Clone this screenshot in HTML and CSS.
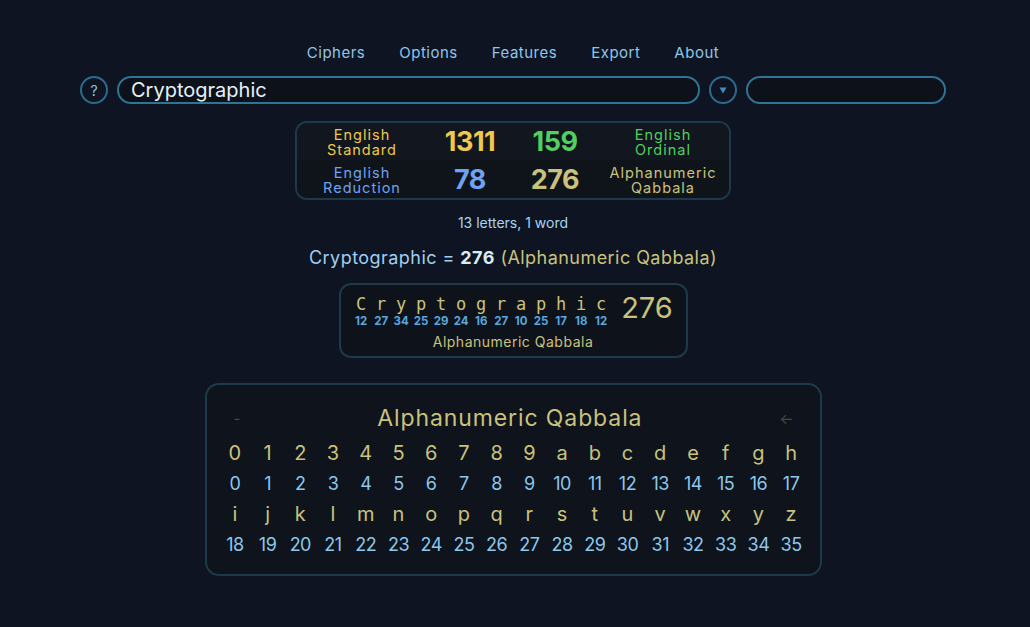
FILE: index.html
```html
<!DOCTYPE html>
<html>
<head>
<meta charset="utf-8">
<link rel="stylesheet" href="styles.css">
</head>
<body>
<div class="page">
  <nav class="menu">
    <span>Ciphers</span><span>Options</span><span>Features</span><span>Export</span><span>About</span>
  </nav>
  <div class="search">
    <div class="circle">?</div>
    <div class="input main">Cryptographic</div>
    <div class="circle"><svg width="8" height="7" viewBox="0 0 8 7"><path d="M0.5 0.5 H7.5 L4 6.5 Z" fill="#3a8fc0"/></svg></div>
    <div class="input side"></div>
  </div>

  <div class="results">
    <div class="row r1">
      <div class="lbl yellow">English<br>Standard</div>
      <div class="num yellow">1311</div>
      <div class="num green">159</div>
      <div class="lbl green">English<br>Ordinal</div>
    </div>
    <div class="row r2">
      <div class="lbl blue">English<br>Reduction</div>
      <div class="num blue">78</div>
      <div class="num khaki">276</div>
      <div class="lbl khaki">Alphanumeric<br>Qabbala</div>
    </div>
  </div>

  <div class="count">13 letters, 1 word</div>
  <div class="sum"><span class="w">Cryptographic = </span><b>276</b> <span class="khaki">(Alphanumeric Qabbala)</span></div>

  <div class="breakdown">
    <div class="bd-top">
      <div class="letters">
        <div class="lc"><span>C</span><i>12</i></div>
        <div class="lc"><span>r</span><i>27</i></div>
        <div class="lc"><span>y</span><i>34</i></div>
        <div class="lc"><span>p</span><i>25</i></div>
        <div class="lc"><span>t</span><i>29</i></div>
        <div class="lc"><span>o</span><i>24</i></div>
        <div class="lc"><span>g</span><i>16</i></div>
        <div class="lc"><span>r</span><i>27</i></div>
        <div class="lc"><span>a</span><i>10</i></div>
        <div class="lc"><span>p</span><i>25</i></div>
        <div class="lc"><span>h</span><i>17</i></div>
        <div class="lc"><span>i</span><i>18</i></div>
        <div class="lc"><span>c</span><i>12</i></div>
      </div>
      <div class="total">276</div>
    </div>
    <div class="bd-label">Alphanumeric Qabbala</div>
  </div>

  <div class="chart">
    <div class="chart-head">
      <span class="dim minus">-</span>
      <span class="title">Alphanumeric Qabbala</span>
      <span class="dim arrow">&#8592;</span>
    </div>
    <div class="grid">
      <span class="l">0</span><span class="l">1</span><span class="l">2</span><span class="l">3</span><span class="l">4</span><span class="l">5</span><span class="l">6</span><span class="l">7</span><span class="l">8</span><span class="l">9</span><span class="l">a</span><span class="l">b</span><span class="l">c</span><span class="l">d</span><span class="l">e</span><span class="l">f</span><span class="l">g</span><span class="l">h</span>
      <span class="n">0</span><span class="n">1</span><span class="n">2</span><span class="n">3</span><span class="n">4</span><span class="n">5</span><span class="n">6</span><span class="n">7</span><span class="n">8</span><span class="n">9</span><span class="n">10</span><span class="n">11</span><span class="n">12</span><span class="n">13</span><span class="n">14</span><span class="n">15</span><span class="n">16</span><span class="n">17</span>
      <span class="l">i</span><span class="l">j</span><span class="l">k</span><span class="l">l</span><span class="l">m</span><span class="l">n</span><span class="l">o</span><span class="l">p</span><span class="l">q</span><span class="l">r</span><span class="l">s</span><span class="l">t</span><span class="l">u</span><span class="l">v</span><span class="l">w</span><span class="l">x</span><span class="l">y</span><span class="l">z</span>
      <span class="n">18</span><span class="n">19</span><span class="n">20</span><span class="n">21</span><span class="n">22</span><span class="n">23</span><span class="n">24</span><span class="n">25</span><span class="n">26</span><span class="n">27</span><span class="n">28</span><span class="n">29</span><span class="n">30</span><span class="n">31</span><span class="n">32</span><span class="n">33</span><span class="n">34</span><span class="n">35</span>
    </div>
  </div>
</div>
</body>
</html>
```

FILE: styles.css
```css
html, body {
  margin: 0;
  padding: 0;
  background: #0e1422;
  height: 100%;
}
body {
  font-family: Inter, "Noto Sans", sans-serif;
  color: #9fd0f0;
}
.page {
  width: 1026px;
  display: flex;
  flex-direction: column;
  align-items: center;
}
.menu {
  margin-top: 43px;
  display: flex;
  gap: 34px;
  font-size: 15px;
  line-height: 20px;
  letter-spacing: 0.5px;
  color: #8ec6e8;
}
.search {
  margin-top: 13px;
  display: flex;
  align-items: center;
  gap: 9px;
}
.circle {
  box-sizing: border-box;
  width: 28px;
  height: 28px;
  border: 2px solid #2b6b8c;
  border-radius: 50%;
  display: flex;
  align-items: center;
  justify-content: center;
  font-size: 14px;
  color: #8ec6e8;
}
.input {
  box-sizing: border-box;
  height: 28px;
  border: 2px solid #2f7395;
  border-radius: 14px;
  background: #0d1119;
}
.input.main {
  width: 583px;
  padding-left: 12px;
  font-size: 20px;
  line-height: 24px;
  color: #e6f2fb;
}
.input.side {
  width: 200px;
}
.results {
  margin-top: 17px;
  box-sizing: border-box;
  width: 436px;
  height: 79px;
  border: 2px solid #1e3949;
  border-radius: 12px;
  background: #10151d;
  overflow: hidden;
}
.row {
  display: grid;
  grid-template-columns: 130px 86px 84px 1fr;
  height: 37px;
  align-items: center;
  text-align: center;
}
.r1 { background: #11161f; }
.r2 { background: #0f141b; height: 38px; padding-top: 1px; box-sizing: border-box; }
.lbl {
  font-size: 14.5px;
  line-height: 15px;
  letter-spacing: 1px;
}
.num {
  font-size: 27px;
  font-weight: 700;
  letter-spacing: -0.5px;
}
.yellow { color: #eec94c; }
.green { color: #52d05e; }
.blue { color: #6fa2f2; }
.khaki { color: #c9c27c; }
.count {
  margin-top: 14px;
  font-size: 14px;
  line-height: 18px;
  color: #a8d4ef;
}
.sum {
  margin-top: 14px;
  font-size: 18px;
  line-height: 24px;
  letter-spacing: 0.45px;
}
.sum .w { color: #9fd0f0; }
.sum b { color: #d8ecf8; }
.breakdown {
  margin-top: 13px;
  box-sizing: border-box;
  width: 349px;
  height: 75px;
  border: 2px solid #1e3949;
  border-radius: 12px;
  background: #0e131b;
  display: flex;
  flex-direction: column;
  align-items: center;
}
.bd-top {
  display: flex;
  align-items: center;
  margin-top: 8px;
  margin-left: -2px;
}
.letters {
  display: flex;
}
.lc {
  width: 20px;
  display: flex;
  flex-direction: column;
  align-items: center;
}
.lc span {
  font-family: "DejaVu Sans Mono", monospace;
  font-size: 17px;
  line-height: 22px;
  color: #c9c27c;
}
.lc i {
  font-style: normal;
  font-size: 11.5px;
  font-weight: 700;
  line-height: 12px;
  color: #5aa6de;
}
.total {
  margin-left: 10px;
  font-size: 29px;
  color: #c9c27c;
  line-height: 34px;
  margin-top: -4px;
}
.bd-label {
  font-size: 14px;
  line-height: 18px;
  letter-spacing: 0.5px;
  color: #c9c27c;
  margin-top: 6px;
}
.chart {
  margin-top: 25px;
  box-sizing: border-box;
  width: 617px;
  height: 193px;
  border: 2px solid #1e3949;
  border-radius: 14px;
  background: #0e131c;
  padding: 0 12px;
}
.chart-head {
  display: flex;
  align-items: center;
  justify-content: space-between;
  height: 26px;
  margin-top: 20px;
  padding: 0 14px 0 15px;
}
.title {
  font-size: 23px;
  letter-spacing: 0.9px;
  color: #c9c27c;
}
.dim {
  color: #4a4a3c;
  font-size: 15px;
}
.grid {
  margin-top: 7px;
  display: grid;
  grid-template-columns: repeat(18, 1fr);
  grid-template-rows: 30px 31px 30px 30px;
  align-items: center;
  text-align: center;
}
.grid .l {
  font-size: 20px;
  color: #c9c27c;
}
.grid .n {
  font-size: 18px;
  color: #8cc7ec;
  letter-spacing: -0.5px;
}
```
